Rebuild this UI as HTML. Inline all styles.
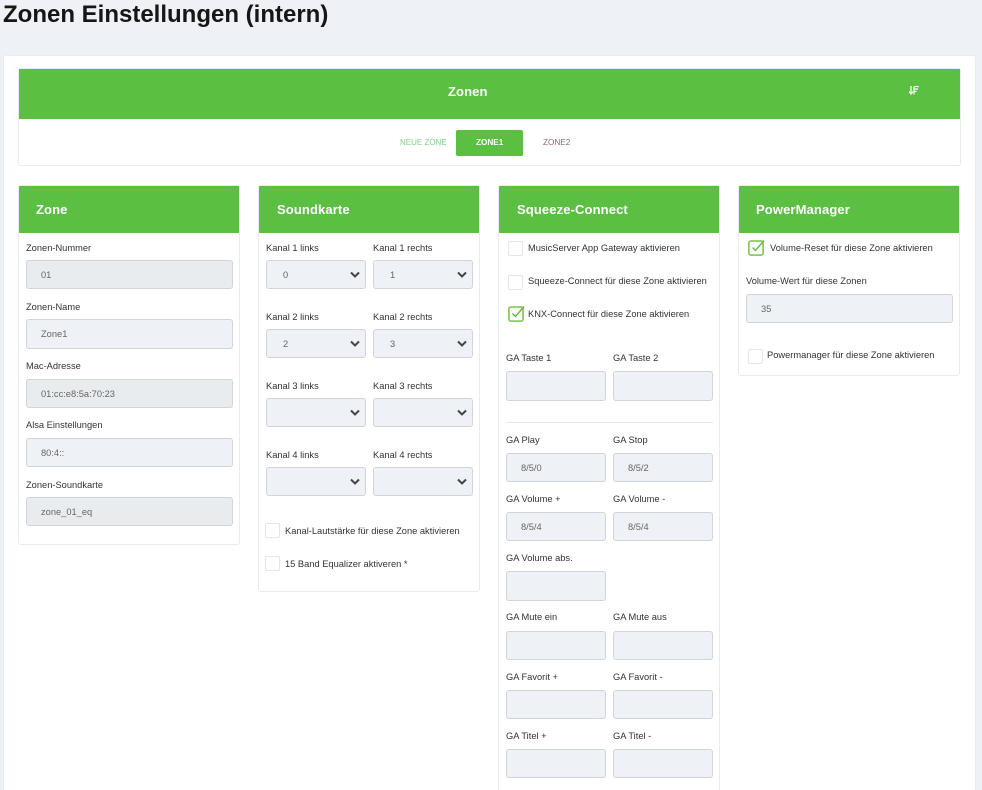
<!DOCTYPE html>
<html lang="de">
<head>
<meta charset="utf-8">
<title>Zonen Einstellungen (intern)</title>
<style>
html,body{margin:0;padding:0;width:982px;height:790px;overflow:hidden;background:#eef2f6;}
body{position:relative;font-family:"Liberation Sans",Arial,sans-serif;font-size:9.3px;color:#333;}
div,span,svg{position:absolute;box-sizing:border-box;}
.t{white-space:nowrap;line-height:12px;height:12px;margin-top:1px;}
.card{background:#fff;border:1px solid #e9ecef;border-radius:3px;}
.hd{background:#5bbf41;}
.ht{color:#fff;font-weight:bold;font-size:13px;letter-spacing:.12px;line-height:16px;height:16px;white-space:nowrap;margin-top:1px;}
.l{color:#333;}
.i{background:#eef1f5;border:1px solid #d0d5dc;border-radius:3px;color:#666;line-height:27px;font-size:9.3px;}
.d{background:#e9ecef;}
.i span{top:1px;left:14px;line-height:26px;white-space:nowrap;}
.cb{width:15px;height:15px;background:#fff;border:1px solid #e3e6ea;border-radius:2px;}
.sel span{left:16px;}
.sel svg{right:5px;top:10px;width:10px;height:8px;}
</style>
</head>
<body>
<div class="t" style="left:3px;top:0;height:30px;line-height:30px;margin-top:0;font-size:24px;font-weight:bold;color:#161616;">Zonen Einstellungen (intern)</div>

<div style="left:3px;top:55px;width:973px;height:745px;background:#fff;border:1px solid #e9ecef;border-radius:3px;"></div>

<!-- Zonen -->
<div class="card" style="left:18px;top:68px;width:943px;height:98px;"></div>
<div class="hd" style="left:19px;top:69px;width:941px;height:50px;"></div>
<div class="ht" style="left:448px;top:83px;">Zonen</div>
<svg style="left:909px;top:86px;width:10px;height:9px;" viewBox="0 0 10 9"><path d="M2 0v7M0 5.5l2 2.5 2-2.5" fill="none" stroke="#fff" stroke-width="1.3"/><path d="M5 0.5h5M5 3h4M5 5.5h2.5M5 .5v8" fill="none" stroke="#fff" stroke-width="1.2"/></svg>
<div class="t" style="left:400px;top:136px;font-size:8px;color:#86cc8e;">NEUE ZONE</div>
<div style="left:456px;top:130px;width:67px;height:26px;background:#5bbf41;border-radius:2px;"></div>
<div class="t" style="left:476px;top:136px;font-size:8.2px;color:#fff;font-weight:bold;">ZONE1</div>
<div class="t" style="left:543px;top:136px;font-size:8.2px;color:#8a6f6a;">ZONE2</div>

<!-- Zone -->
<div class="card" style="left:18px;top:185px;width:222px;height:360px;"></div>
<div class="hd" style="left:19px;top:186px;width:220px;height:47px;"></div>
<div class="ht" style="left:36px;top:201px;">Zone</div>
<div class="t l" style="left:26px;top:241px;">Zonen-Nummer</div>
<div class="i d" style="left:26px;top:260px;width:207px;height:29px;"><span>01</span></div>
<div class="t l" style="left:26px;top:300px;">Zonen-Name</div>
<div class="i" style="left:26px;top:319px;width:207px;height:30px;"><span>Zone1</span></div>
<div class="t l" style="left:26px;top:359px;">Mac-Adresse</div>
<div class="i d" style="left:26px;top:379px;width:207px;height:29px;"><span>01:cc:e8:5a:70:23</span></div>
<div class="t l" style="left:26px;top:418px;">Alsa Einstellungen</div>
<div class="i" style="left:26px;top:438px;width:207px;height:29px;"><span>80:4::</span></div>
<div class="t l" style="left:26px;top:478px;">Zonen-Soundkarte</div>
<div class="i d" style="left:26px;top:497px;width:207px;height:29px;"><span>zone_01_eq</span></div>

<!-- Soundkarte -->
<div class="card" style="left:258px;top:185px;width:222px;height:407px;"></div>
<div class="hd" style="left:259px;top:186px;width:220px;height:47px;"></div>
<div class="ht" style="left:277px;top:201px;">Soundkarte</div>

<div class="t l" style="left:266px;top:241px;">Kanal 1 links</div>
<div class="t l" style="left:373px;top:241px;">Kanal 1 rechts</div>
<div class="i sel" style="left:266px;top:260px;width:100px;height:29px;"><span>0</span><svg viewBox="0 0 10 8"><path d="M1 1.5l4 4 4-4" fill="none" stroke="#444" stroke-width="2"/></svg></div>
<div class="i sel" style="left:373px;top:260px;width:100px;height:29px;"><span>1</span><svg viewBox="0 0 10 8"><path d="M1 1.5l4 4 4-4" fill="none" stroke="#444" stroke-width="2"/></svg></div>

<div class="t l" style="left:266px;top:310px;">Kanal 2 links</div>
<div class="t l" style="left:373px;top:310px;">Kanal 2 rechts</div>
<div class="i sel" style="left:266px;top:329px;width:100px;height:29px;"><span>2</span><svg viewBox="0 0 10 8"><path d="M1 1.5l4 4 4-4" fill="none" stroke="#444" stroke-width="2"/></svg></div>
<div class="i sel" style="left:373px;top:329px;width:100px;height:29px;"><span>3</span><svg viewBox="0 0 10 8"><path d="M1 1.5l4 4 4-4" fill="none" stroke="#444" stroke-width="2"/></svg></div>

<div class="t l" style="left:266px;top:379px;">Kanal 3 links</div>
<div class="t l" style="left:373px;top:379px;">Kanal 3 rechts</div>
<div class="i sel" style="left:266px;top:398px;width:100px;height:29px;"><svg viewBox="0 0 10 8"><path d="M1 1.5l4 4 4-4" fill="none" stroke="#444" stroke-width="2"/></svg></div>
<div class="i sel" style="left:373px;top:398px;width:100px;height:29px;"><svg viewBox="0 0 10 8"><path d="M1 1.5l4 4 4-4" fill="none" stroke="#444" stroke-width="2"/></svg></div>

<div class="t l" style="left:266px;top:448px;">Kanal 4 links</div>
<div class="t l" style="left:373px;top:448px;">Kanal 4 rechts</div>
<div class="i sel" style="left:266px;top:467px;width:100px;height:29px;"><svg viewBox="0 0 10 8"><path d="M1 1.5l4 4 4-4" fill="none" stroke="#444" stroke-width="2"/></svg></div>
<div class="i sel" style="left:373px;top:467px;width:100px;height:29px;"><svg viewBox="0 0 10 8"><path d="M1 1.5l4 4 4-4" fill="none" stroke="#444" stroke-width="2"/></svg></div>

<div class="cb" style="left:265px;top:523px;"></div>
<div class="t l" style="left:285px;top:524px;">Kanal-Lautstärke für diese Zone aktivieren</div>
<div class="cb" style="left:265px;top:556px;"></div>
<div class="t l" style="left:285px;top:557px;">15 Band Equalizer aktiveren *</div>

<!-- Squeeze-Connect -->
<div class="card" style="left:498px;top:185px;width:222px;height:640px;"></div>
<div class="hd" style="left:499px;top:186px;width:220px;height:47px;"></div>
<div class="ht" style="left:517px;top:201px;">Squeeze-Connect</div>
<div class="cb" style="left:508px;top:241px;"></div>
<div class="t l" style="left:528px;top:241px;">MusicServer App Gateway aktivieren</div>
<div class="cb" style="left:508px;top:275px;"></div>
<div class="t l" style="left:528px;top:274px;">Squeeze-Connect für diese Zone aktivieren</div>
<svg style="left:508px;top:305px;width:18px;height:17px;" viewBox="0 0 18 17"><rect x=".9" y="2" width="14.2" height="14.1" rx="2" fill="#fff" stroke="#8ccb5e" stroke-width="1.8"/><path d="M4.5 8.5l3 3L16 1.5" fill="none" stroke="#5bbf41" stroke-width="1.4"/></svg>
<div class="t l" style="left:528px;top:307px;">KNX-Connect für diese Zone aktivieren</div>

<div class="t l" style="left:506px;top:351px;">GA Taste 1</div>
<div class="t l" style="left:613px;top:351px;">GA Taste 2</div>
<div class="i" style="left:506px;top:371px;width:100px;height:30px;"></div>
<div class="i" style="left:613px;top:371px;width:100px;height:30px;"></div>
<div style="left:506px;top:422px;width:207px;height:1px;background:#e6e8eb;"></div>

<div class="t l" style="left:506px;top:433px;">GA Play</div>
<div class="t l" style="left:613px;top:433px;">GA Stop</div>
<div class="i" style="left:506px;top:453px;width:100px;height:29px;"><span>8/5/0</span></div>
<div class="i" style="left:613px;top:453px;width:100px;height:29px;"><span>8/5/2</span></div>

<div class="t l" style="left:506px;top:492px;">GA Volume +</div>
<div class="t l" style="left:613px;top:492px;">GA Volume -</div>
<div class="i" style="left:506px;top:512px;width:100px;height:29px;"><span>8/5/4</span></div>
<div class="i" style="left:613px;top:512px;width:100px;height:29px;"><span>8/5/4</span></div>

<div class="t l" style="left:506px;top:551px;">GA Volume abs.</div>
<div class="i" style="left:506px;top:571px;width:100px;height:30px;"></div>

<div class="t l" style="left:506px;top:610px;">GA Mute ein</div>
<div class="t l" style="left:613px;top:610px;">GA Mute aus</div>
<div class="i" style="left:506px;top:631px;width:100px;height:29px;"></div>
<div class="i" style="left:613px;top:631px;width:100px;height:29px;"></div>

<div class="t l" style="left:506px;top:670px;">GA Favorit +</div>
<div class="t l" style="left:613px;top:670px;">GA Favorit -</div>
<div class="i" style="left:506px;top:690px;width:100px;height:29px;"></div>
<div class="i" style="left:613px;top:690px;width:100px;height:29px;"></div>

<div class="t l" style="left:506px;top:729px;">GA Titel +</div>
<div class="t l" style="left:613px;top:729px;">GA Titel -</div>
<div class="i" style="left:506px;top:749px;width:100px;height:29px;"></div>
<div class="i" style="left:613px;top:749px;width:100px;height:29px;"></div>

<!-- PowerManager -->
<div class="card" style="left:738px;top:185px;width:222px;height:191px;"></div>
<div class="hd" style="left:739px;top:186px;width:220px;height:47px;"></div>
<div class="ht" style="left:756px;top:201px;">PowerManager</div>
<svg style="left:748px;top:239px;width:18px;height:17px;" viewBox="0 0 18 17"><rect x=".9" y="2" width="14.2" height="14.1" rx="2" fill="#fff" stroke="#8ccb5e" stroke-width="1.8"/><path d="M4.5 8.5l3 3L16 1.5" fill="none" stroke="#5bbf41" stroke-width="1.4"/></svg>
<div class="t l" style="left:770px;top:241px;">Volume-Reset für diese Zone aktivieren</div>
<div class="t l" style="left:746px;top:274px;">Volume-Wert für diese Zonen</div>
<div class="i" style="left:746px;top:294px;width:207px;height:29px;"><span>35</span></div>
<div class="cb" style="left:748px;top:349px;"></div>
<div class="t l" style="left:767px;top:348px;">Powermanager für diese Zone aktivieren</div>
</body>
</html>
